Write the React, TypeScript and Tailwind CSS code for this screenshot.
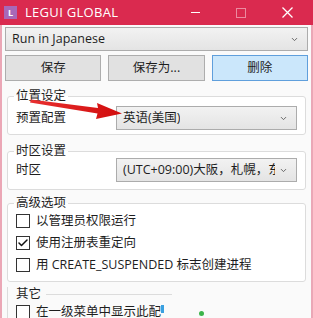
import React from 'react';
import { ChevronDown, Check } from 'lucide-react';

const cjk = { fontFamily: '"Open Sans", "Noto Sans CJK SC", sans-serif' };

const Select = ({ text, className = '' }: { text: string; className?: string }) => (
  <div
    className={`flex items-center justify-between border border-[#acacac] bg-gradient-to-b from-[#f2f2f2] to-[#e4e4e4] pl-[6px] pr-[8px] text-[12.5px] text-[#1e1e1e] ${className}`}
  >
    <span className="overflow-hidden whitespace-nowrap">{text}</span>
    <ChevronDown className="ml-[4px] h-[9px] w-[9px] shrink-0 text-[#606060]" strokeWidth={2.5} />
  </div>
);

const Box = ({ title, children, className = '' }: { title: string; children: React.ReactNode; className?: string }) => (
  <fieldset className={`rounded-[3px] border border-[#dcdcdc] bg-white px-[8px] ${className}`}>
    <legend className="-ml-[2px] px-[2px] text-[12.5px] leading-[14px] text-[#1e1e1e]">{title}</legend>
    {children}
  </fieldset>
);

const CheckRow = ({ label, checked = false }: { label: string; checked?: boolean }) => (
  <div className="flex h-[22px] items-center gap-[6px] text-[12.5px] text-[#1e1e1e]">
    <div className="flex h-[14px] w-[14px] shrink-0 items-center justify-center border border-[#333] bg-white">
      {checked && <Check className="h-[12px] w-[12px] text-[#111]" strokeWidth={3} />}
    </div>
    <span className="whitespace-nowrap">{label}</span>
  </div>
);

export default function App() {
  return (
    <div className="relative h-[318px] w-[313px] overflow-hidden bg-[#fafafa]" style={cjk}>
      {/* Title bar */}
      <div className="flex h-[25px] items-center bg-[#da2a4f] text-white">
        <div className="ml-[4px] flex h-[13px] w-[13px] items-center justify-center bg-[#a868b8] text-[9px] font-bold leading-none">
          L
        </div>
        <span className="ml-[8px] text-[13px] leading-none tracking-[0.3px]">LEGUI GLOBAL</span>
        <div className="ml-auto flex items-center">
          <div className="mr-[36px] h-[1px] w-[9px] bg-white" />
          <div className="mr-[36px] h-[10px] w-[10px] border border-[#eb8aa0]" />
          <svg width="11" height="11" viewBox="0 0 11 11" className="mr-[20px]">
            <path d="M0.5 0.5 L10.5 10.5 M10.5 0.5 L0.5 10.5" stroke="white" strokeWidth="1.3" />
          </svg>
        </div>
      </div>

      {/* Body */}
      <div className="border-x-2 border-[#eba7b6] px-[3px] pt-[2px]">
        <Select text="Run in Japanese" className="h-[24px]" />

        <div className="mt-[4px] flex gap-[7px]">
          <button className="h-[26px] flex-1 border border-[#adadad] bg-[#e1e1e1] text-[12.5px] text-[#1e1e1e]">保存</button>
          <button className="h-[26px] flex-1 border border-[#adadad] bg-[#e1e1e1] text-[12.5px] text-[#1e1e1e]">保存为...</button>
          <button className="h-[26px] flex-1 border border-[#5f9fdc] bg-[#cbe7fb] text-[12.5px] text-[#1e1e1e]">删除</button>
        </div>

        <div className="px-[2px]">
          <Box title="位置设定" className="mt-[8px] h-[46px]">
            <div className="flex items-center justify-between pt-[3px]">
              <span className="text-[12.5px] text-[#1e1e1e]">预置配置</span>
              <Select text="英语(美国)" className="h-[24px] w-[181px]" />
            </div>
          </Box>

          <Box title="时区设置" className="mt-[9px] h-[46px]">
            <div className="flex items-center justify-between">
              <span className="text-[12.5px] text-[#1e1e1e]">时区</span>
              <Select text="(UTC+09:00)大阪，札幌，东京" className="h-[24px] w-[181px]" />
            </div>
          </Box>

          <Box title="高级选项" className="mt-[6px] h-[86px]">
            <CheckRow label="以管理员权限运行" />
            <CheckRow label="使用注册表重定向" checked />
            <CheckRow label="用 CREATE_SUSPENDED 标志创建进程" />
          </Box>

          <div className="relative mt-[5px] border-l border-[#dcdcdc] pl-[8px]">
            <div className="flex items-center">
              <span className="text-[12.5px] leading-[14px] text-[#1e1e1e]">其它</span>
              <div className="ml-[5px] h-[1px] w-[126px] bg-[#dcdcdc]" />
            </div>
            <CheckRow label="在一级菜单中显示此配" />
            <div className="absolute left-[153px] top-[18px] h-[8px] w-[3px] bg-[#3aa0e0]" />
            <div className="absolute left-[191px] top-[24px] h-[5px] w-[5px] rounded-full bg-[#3cb44b]" />
          </div>
        </div>
      </div>

      {/* Red arrow annotation */}
      <svg className="pointer-events-none absolute left-0 top-0" width="313" height="318">
        <defs>
          <linearGradient id="ar" x1="0" y1="0" x2="1" y2="0">
            <stop offset="0" stopColor="#e83030" />
            <stop offset="1" stopColor="#d10c0c" />
          </linearGradient>
        </defs>
        <path d="M31 99.5 L98 108 L97 103 L122 113.5 L96 119 L97.5 113.5 L30 102.5 Z" fill="url(#ar)" />
      </svg>
    </div>
  );
}
